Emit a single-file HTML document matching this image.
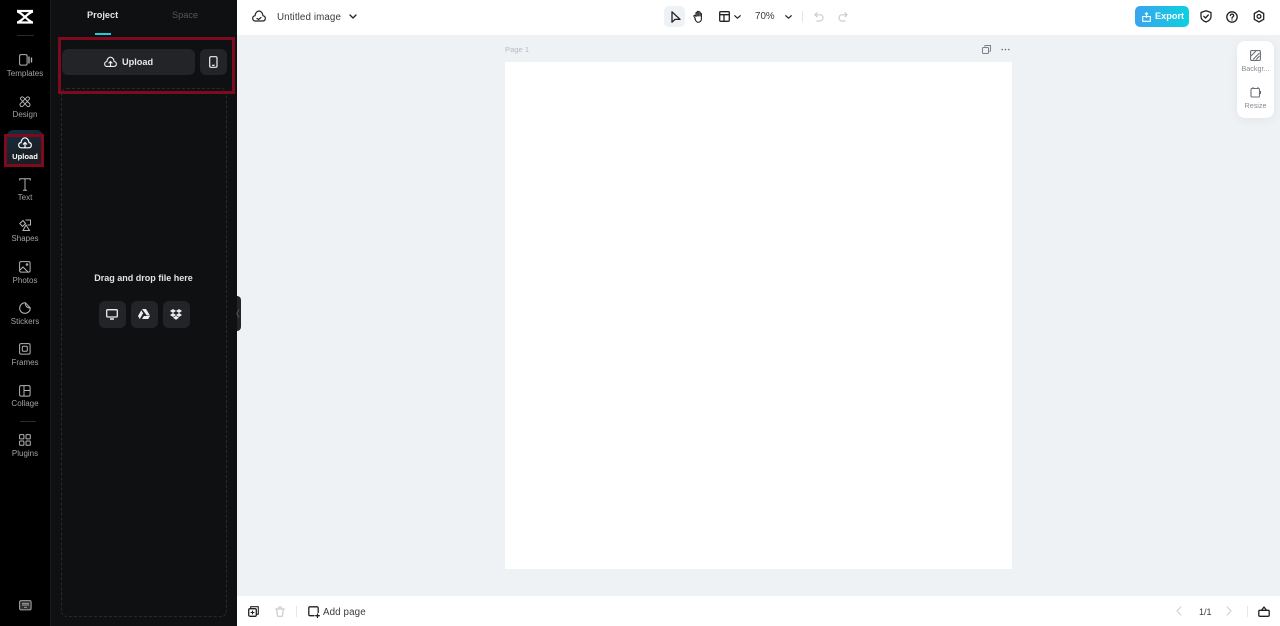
<!DOCTYPE html>
<html><head><meta charset="utf-8"><title>Untitled image</title>
<style>
html,body{margin:0;padding:0;width:1280px;height:626px;overflow:hidden;background:#eff2f5;font-family:"Liberation Sans",sans-serif}
.a{position:absolute}
#rail{left:0;top:0;width:50px;height:626px;background:#000}
#panel{left:50px;top:0;width:187px;height:626px;background:#0f1012;border-left:1px solid #17181a;box-sizing:border-box}
.lbl{position:absolute;left:0;width:50px;text-align:center;font-size:8px;line-height:10px;color:#a2a3a5;white-space:nowrap;margin-top:1px}
svg{position:absolute;overflow:visible;fill:none}
.ri{stroke:#b4b5b7;stroke-width:1}
.btn{position:absolute;background:#232427;border-radius:6px}
.tb{stroke:#222;stroke-width:1.3;stroke-linecap:round;stroke-linejoin:round}
.dis{stroke:#c9ccd1;stroke-width:1.2;stroke-linecap:round;stroke-linejoin:round}
</style></head><body>
<div class="a" id="rail"></div>
<div class="a" id="panel"></div>

<!-- logo -->
<svg style="left:16px;top:9px" width="18" height="16" viewBox="0 0 18 16"><path d="M1 2h16M1 2.500c0 0 2 0 8 5.500c5-5 8-5.500 8-5.500M1 13.500c0 0 2 0 8-5.500c6 5.500 8 5.500 8 5.500M1 13.500h16" stroke="#fff" stroke-width="2.200"/></svg>
<div class="a" style="left:17px;top:35px;width:17px;height:1px;background:#2a2a2c"></div>

<!-- rail items -->
<svg class="ri" style="left:19px;top:54px" width="14" height="12"><rect x=".6" y=".6" width="7.500" height="10.500" rx="1.500"/><path d="M10 2.500v7M12.500 3.500v5" stroke-width="1.300"/></svg>
<div class="lbl" style="top:68px">Templates</div>
<svg class="ri" style="left:19px;top:96px" width="12" height="12" viewBox="0 0 12 12"><path d="M1.500 3C1 1.500 3 .3 4.200 1.200L10.500 7.500c1.500 1.500-.5 4-2.300 2.800L1.500 3zM10.500 3C11 1.500 9 .3 7.800 1.200L1.500 7.500c-1.500 1.500.5 4 2.300 2.800L10.500 3z" stroke-width=".9"/></svg>
<div class="lbl" style="top:109px">Design</div>

<!-- upload active -->
<div class="a" style="left:6px;top:130px;width:38px;height:37px;border-radius:8px;background:linear-gradient(160deg,#123044,#1a2026 60%,#1b1c20)"></div>
<div class="a" style="left:4px;top:134px;width:40px;height:33px;border:3px solid #7d0a1e;box-sizing:border-box"></div>
<svg style="left:18px;top:137px" width="14" height="12" viewBox="0 0 14 12"><path d="M3.500 10.800C1.500 10.800.7 9.500.7 8.200c0-1.500 1-2.500 2.300-2.600C3.200 3 5 .8 7 .8s3.800 2.200 4 4.800c1.300.1 2.300 1.100 2.300 2.600 0 1.300-.8 2.600-2.800 2.600z" stroke="#fff" stroke-width="1.200"/><path d="M7 10.500V6M5 7.500L7 5.500l2 2" stroke="#fff" stroke-width="1.200"/></svg>
<div class="lbl" style="top:151px;color:#fff;font-weight:bold;font-size:7.600px">Upload</div>

<svg class="ri" style="left:19px;top:178px" width="12" height="13"><path d="M.7 2.500V.7h10.600v1.800M6 .7v11.600M4 12.300h4"/></svg>
<div class="lbl" style="top:192px">Text</div>
<svg class="ri" style="left:19px;top:219px" width="12" height="12"><path d="M4 1.500L.8 4.500 3.500 7.500 6.500 4.500zM6.500 1h5v5h-3M7 6l3.500 5.500h-6.500z"/></svg>
<div class="lbl" style="top:233px">Shapes</div>
<svg class="ri" style="left:19px;top:261px" width="12" height="12"><rect x=".6" y=".6" width="10.500" height="10.500" rx="1.500"/><path d="M1 9l3-3 5 5"/><circle cx="8" cy="3.500" r=".8"/></svg>
<div class="lbl" style="top:275px">Photos</div>
<svg class="ri" style="left:19px;top:302px" width="12" height="12"><path d="M6.500.8C3.200.6.7 3.100.7 6.200c0 2.900 2.400 5.100 5.300 5.100 3 0 5.300-2.300 5.300-5.300L6.500.8zM6.500.8c-.5 3 1.500 5.200 4.800 5.200"/></svg>
<div class="lbl" style="top:316px">Stickers</div>
<svg class="ri" style="left:19px;top:343px" width="12" height="12"><rect x=".6" y=".6" width="10.500" height="10.500" rx="1.500"/><rect x="3.300" y="3.300" width="5" height="5" rx="1.200"/></svg>
<div class="lbl" style="top:357px">Frames</div>
<svg class="ri" style="left:19px;top:385px" width="12" height="12"><rect x=".6" y=".6" width="10.500" height="10.500" rx="1.500"/><path d="M5 .6v10.500M5 5.500h6"/></svg>
<div class="lbl" style="top:398px">Collage</div>
<div class="a" style="left:20px;top:421px;width:16px;height:1px;background:#2a2a2c"></div>
<svg class="ri" style="left:19px;top:434px" width="12" height="12"><rect x=".6" y=".6" width="4.300" height="4.300" rx=".8"/><rect x="7" y=".6" width="4.300" height="4.300" rx=".8"/><rect x=".6" y="7" width="4.300" height="4.300" rx=".8"/><rect x="7" y="7" width="4.300" height="4.300" rx=".8"/></svg>
<div class="lbl" style="top:448px">Plugins</div>
<svg style="left:19px;top:600px" width="13" height="11"><rect x=".6" y=".6" width="11.500" height="9.300" rx="1.500" fill="#2f3032" stroke="#a6a7a9"/><path d="M3 3.300h7M3 5h7M5 7.300h3" stroke="#a6a7a9" stroke-width=".9"/></svg>

<!-- panel -->
<div class="a" style="left:87px;top:9px;font-size:9.200px;line-height:12px;font-weight:bold;color:#e4e4e5">Project</div>
<div class="a" style="left:172px;top:9px;font-size:9.200px;line-height:12px;color:#55565a">Space</div>
<div class="a" style="left:95px;top:33px;width:16px;height:2px;background:#22c8dc"></div>
<div class="a" style="left:61px;top:88px;width:166px;height:529px;border:1px dashed #28292c;border-radius:6px;box-sizing:border-box"></div>
<div class="a" style="left:58px;top:37px;width:177px;height:57px;border:3px solid #7d0a1e;box-sizing:border-box"></div>
<div class="btn" style="left:62px;top:49px;width:133px;height:26px"></div>
<svg style="left:104px;top:56px" width="13" height="12" viewBox="0 0 14 12"><path d="M3.500 10.800C1.500 10.800.7 9.500.7 8.200c0-1.500 1-2.500 2.300-2.600C3.200 3 5 .8 7 .8s3.800 2.200 4 4.800c1.300.1 2.300 1.100 2.300 2.600 0 1.300-.8 2.600-2.800 2.600z" stroke="#eee" stroke-width="1.200"/><path d="M7 10.500V6M5 7.500L7 5.500l2 2" stroke="#eee" stroke-width="1.200"/></svg>
<div class="a" style="left:122px;top:55px;font-size:9.200px;line-height:14px;font-weight:bold;color:#e8e8e8">Upload</div>
<div class="btn" style="left:200px;top:49px;width:27px;height:26px"></div>
<svg style="left:209px;top:56px" width="9" height="12"><rect x=".7" y=".7" width="7.300" height="10.600" rx="1.300" stroke="#eee" stroke-width="1.200"/><path d="M3 9.300h2.700" stroke="#eee" stroke-width="1.200"/></svg>

<div class="a" style="left:50px;width:187px;top:272px;text-align:center;font-size:9px;line-height:12px;font-weight:bold;color:#e2e2e3">Drag and drop file here</div>
<div class="btn" style="left:99px;top:301px;width:27px;height:27px"></div>
<svg style="left:106px;top:309px" width="12" height="11"><rect x=".7" y=".7" width="10.600" height="7.300" rx="1" stroke="#eee" stroke-width="1.300"/><path d="M4 10h4" stroke="#eee" stroke-width="1.500"/></svg>
<div class="btn" style="left:131px;top:301px;width:27px;height:27px"></div>
<svg style="left:138px;top:309px" width="12" height="10" viewBox="0 0 12 10"><path d="M4 0h4l4 6.500H8.800zM3.300 1.200L0 7l1.800 3 3.300-5.800zM4 10l1.900-3H12l-1.800 3z" fill="#eee"/></svg>
<div class="btn" style="left:163px;top:301px;width:27px;height:27px"></div>
<svg style="left:170px;top:309px" width="12" height="11" viewBox="0 0 12 11"><path d="M3 0L0 2l3 2 3-2zM9 0L6 2l3 2 3-2zM3 4L0 6l3 2 3-2zM9 4L6 6l3 2 3-2zM3 8.800l3-2 3 2-3 2z" fill="#eee"/></svg>

<!-- collapse handle -->
<div class="a" style="left:237px;top:296px;width:4px;height:35px;background:#232427;border-radius:0 6px 6px 0"></div>
<svg style="left:236px;top:309px" width="4" height="9"><path d="M3 .5L.8 4.500 3 8.500" stroke="#55565a"/></svg>

<!-- top bar -->
<div class="a" style="left:237px;top:0;width:1043px;height:35px;background:#fff"></div>
<svg class="tb" style="left:252px;top:10px" width="14" height="12" viewBox="0 0 14 12"><path d="M3.500 11C1.500 11 .7 9.700.7 8.400c0-1.500 1-2.500 2.300-2.600C3.200 3 5 1 7 1s3.800 2 4 4.800c1.300.1 2.300 1.100 2.300 2.600 0 1.300-.8 2.600-2.800 2.600zM5 8.500l1.500 1 2.500-2" stroke-width="1.200"/></svg>
<div class="a" style="left:277px;top:12px;font-size:9.800px;line-height:12px;letter-spacing:.1px;color:#3a3b3e">Untitled image</div>
<svg class="tb" style="left:349px;top:14px" width="8" height="5"><path d="M1 1l3 3 3-3"/></svg>

<div class="a" style="left:664px;top:6px;width:21px;height:21px;border-radius:5px;background:#eef1f5"></div>
<svg class="tb" style="left:671px;top:11px" width="10" height="12"><path d="M1 .8v10.400l3-2.800h5z"/></svg>
<svg class="tb" style="left:693px;top:10px" width="12" height="13" viewBox="0 0 12 13"><path d="M2.500 9L1 6.500c-.5-1 .8-1.600 1.500-.8L3 6.500V3c0-1 1.300-1 1.300 0V6V2c0-1 1.400-1 1.400 0v4V2.500c0-1 1.400-1 1.400 0V6V4c0-1 1.300-1 1.300 0v5c0 2-1.500 3.300-3 3.300-2 0-2.800-1.500-3.400-3.300z" stroke-width="1.100"/></svg>
<svg class="tb" style="left:719px;top:11px" width="11" height="11"><rect x=".7" y=".7" width="9.600" height="9.600" rx="1"/><path d="M.7 3.700h9.600M5 3.700v6.600"/></svg>
<svg class="tb" style="left:734px;top:15px" width="7" height="4"><path d="M.7.700l2.800 2.500 2.800-2.500" stroke-width="1.200"/></svg>
<div class="a" style="left:755px;top:11px;font-size:9.800px;line-height:12px;color:#3a3b3e">70%</div>
<svg class="tb" style="left:785px;top:15px" width="7" height="4"><path d="M.7.700l2.800 2.500 2.800-2.500" stroke-width="1.200"/></svg>
<div class="a" style="left:802px;top:11px;width:1px;height:11px;background:#e4e6ea"></div>
<svg class="dis" style="left:814px;top:12px" width="10" height="10"><path d="M3 .7L1 2.800l2 2M1 2.800h5c1.800 0 3 1.300 3 3s-1.200 3.200-3 3.200H3"/></svg>
<svg class="dis" style="left:838px;top:12px" width="10" height="10"><path d="M7 .7l2 2.100-2 2M9 2.800H4c-1.800 0-3 1.300-3 3S2.200 9 4 9h3"/></svg>

<div class="a" style="left:1135px;top:6px;width:54px;height:21px;border-radius:5px;background:linear-gradient(90deg,#3aa4ee,#0cd0e0)"></div>
<svg style="left:1142px;top:12px" width="9" height="10"><path d="M.7 4.500h7.600v4.800H.7zM4.500 6V1M3 2.300L4.500.8 6 2.300" stroke="#fff" stroke-width="1.100"/></svg>
<div class="a" style="left:1155px;top:10px;font-size:9.200px;line-height:13px;font-weight:bold;color:#fff">Export</div>
<svg class="tb" style="left:1200px;top:10px" width="12" height="13"><path d="M6 .8l5 1.700v4c0 2.700-2.300 4.500-5 5.500-2.700-1-5-2.800-5-5.500v-4zM3.800 6.300L5.500 8l2.800-3"/></svg>
<svg class="tb" style="left:1226px;top:11px" width="12" height="12"><circle cx="6" cy="6" r="5.200"/><path d="M4.400 4.600C4.500 3.600 5.200 3.100 6 3.100c1 0 1.700.6 1.700 1.500C7.700 5.800 6 5.800 6 7.200M6 8.900v.1"/></svg>
<svg class="tb" style="left:1253px;top:10px" width="12" height="13"><path d="M6 .8l4.700 2.700v5.800L6 12 1.300 9.300V3.500z"/><circle cx="6" cy="6.400" r="1.900"/></svg>

<!-- canvas -->
<div class="a" style="left:505px;top:45px;font-size:7.600px;line-height:10px;color:#b6bac0">Page 1</div>
<svg style="left:982px;top:45px" width="9" height="9" stroke="#7c8088" stroke-width="1"><rect x=".5" y="2.500" width="6" height="6" rx="1"/><path d="M2.500 1.500 3 .5h5.500V6l-1 .5"/></svg>
<svg style="left:1001px;top:48px" width="9" height="3"><circle cx="1.200" cy="1.500" r=".8" fill="#666"/><circle cx="4.500" cy="1.500" r=".8" fill="#666"/><circle cx="7.800" cy="1.500" r=".8" fill="#666"/></svg>
<div class="a" style="left:505px;top:62px;width:507px;height:507px;background:#fff"></div>

<!-- right float -->
<div class="a" style="left:1237px;top:41px;width:37px;height:77px;background:#fff;border-radius:8px;box-shadow:0 2px 10px rgba(0,0,0,.06)"></div>
<svg style="left:1250px;top:50px" width="11" height="11" stroke="#6e7078" stroke-width="1.100"><rect x=".6" y=".6" width="9.800" height="9.800" rx="1"/><path d="M1 6L6 1M3 9.500L9.500 3M6 9.500l3.500-3.500"/></svg>
<div class="a" style="left:1237px;top:64px;width:37px;text-align:center;font-size:7.200px;line-height:9px;color:#8a8d94">Backgr...</div>
<svg style="left:1250px;top:87px" width="11" height="11" stroke="#6e7078" stroke-width="1.100"><rect x="1" y="1.500" width="8.500" height="8.500" rx="1"/><path d="M3 0v2M8 0v2M10.500 4v3"/></svg>
<div class="a" style="left:1237px;top:101px;width:37px;text-align:center;font-size:7.200px;line-height:9px;color:#8a8d94">Resize</div>

<!-- bottom bar -->
<div class="a" style="left:237px;top:596px;width:1043px;height:30px;background:#fff"></div>
<svg class="tb" style="left:248px;top:606px" width="11" height="11"><rect x=".7" y="2.700" width="7.600" height="7.600" rx="1.300"/><path d="M2.700 2.700V.7h7.600v7.600H8.300M4.500 5v3M3 6.500h3" stroke-width="1.100"/></svg>
<svg class="dis" style="left:275px;top:606px" width="10" height="11"><path d="M.7 3h8.600M3.500 3c0-3 3-3 3 0M1.700 3l.8 7.300h5L8.300 3"/></svg>
<div class="a" style="left:296px;top:606px;width:1px;height:11px;background:#e4e6ea"></div>
<svg class="tb" style="left:308px;top:606px" width="12" height="12"><path d="M6 9.700H2a1.200 1.200 0 0 1-1.200-1.200V2A1.200 1.200 0 0 1 2 .8h7A1.200 1.200 0 0 1 10.200 2v4.500M9.500 8v3.500M7.700 9.700h3.600"/></svg>
<div class="a" style="left:323px;top:606px;font-size:9.800px;line-height:13px;letter-spacing:.1px;color:#3a3b3e">Add page</div>
<svg class="dis" style="left:1176px;top:606px" width="6" height="10"><path d="M5 .8L1 5l4 4.200" stroke-width="1"/></svg>
<div class="a" style="left:1199px;top:606px;font-size:9px;line-height:12px;color:#3a3b3e">1/1</div>
<svg class="dis" style="left:1226px;top:606px" width="6" height="10"><path d="M1 .8L5 5 1 9.200" stroke-width="1"/></svg>
<div class="a" style="left:1247px;top:606px;width:1px;height:11px;background:#e4e6ea"></div>
<svg class="tb" style="left:1258px;top:606px" width="12" height="11"><rect x=".8" y="4.300" width="10.400" height="6" rx="1"/><path d="M3.500 4.300L6 1l2.500 3.300"/></svg>
</body></html>
